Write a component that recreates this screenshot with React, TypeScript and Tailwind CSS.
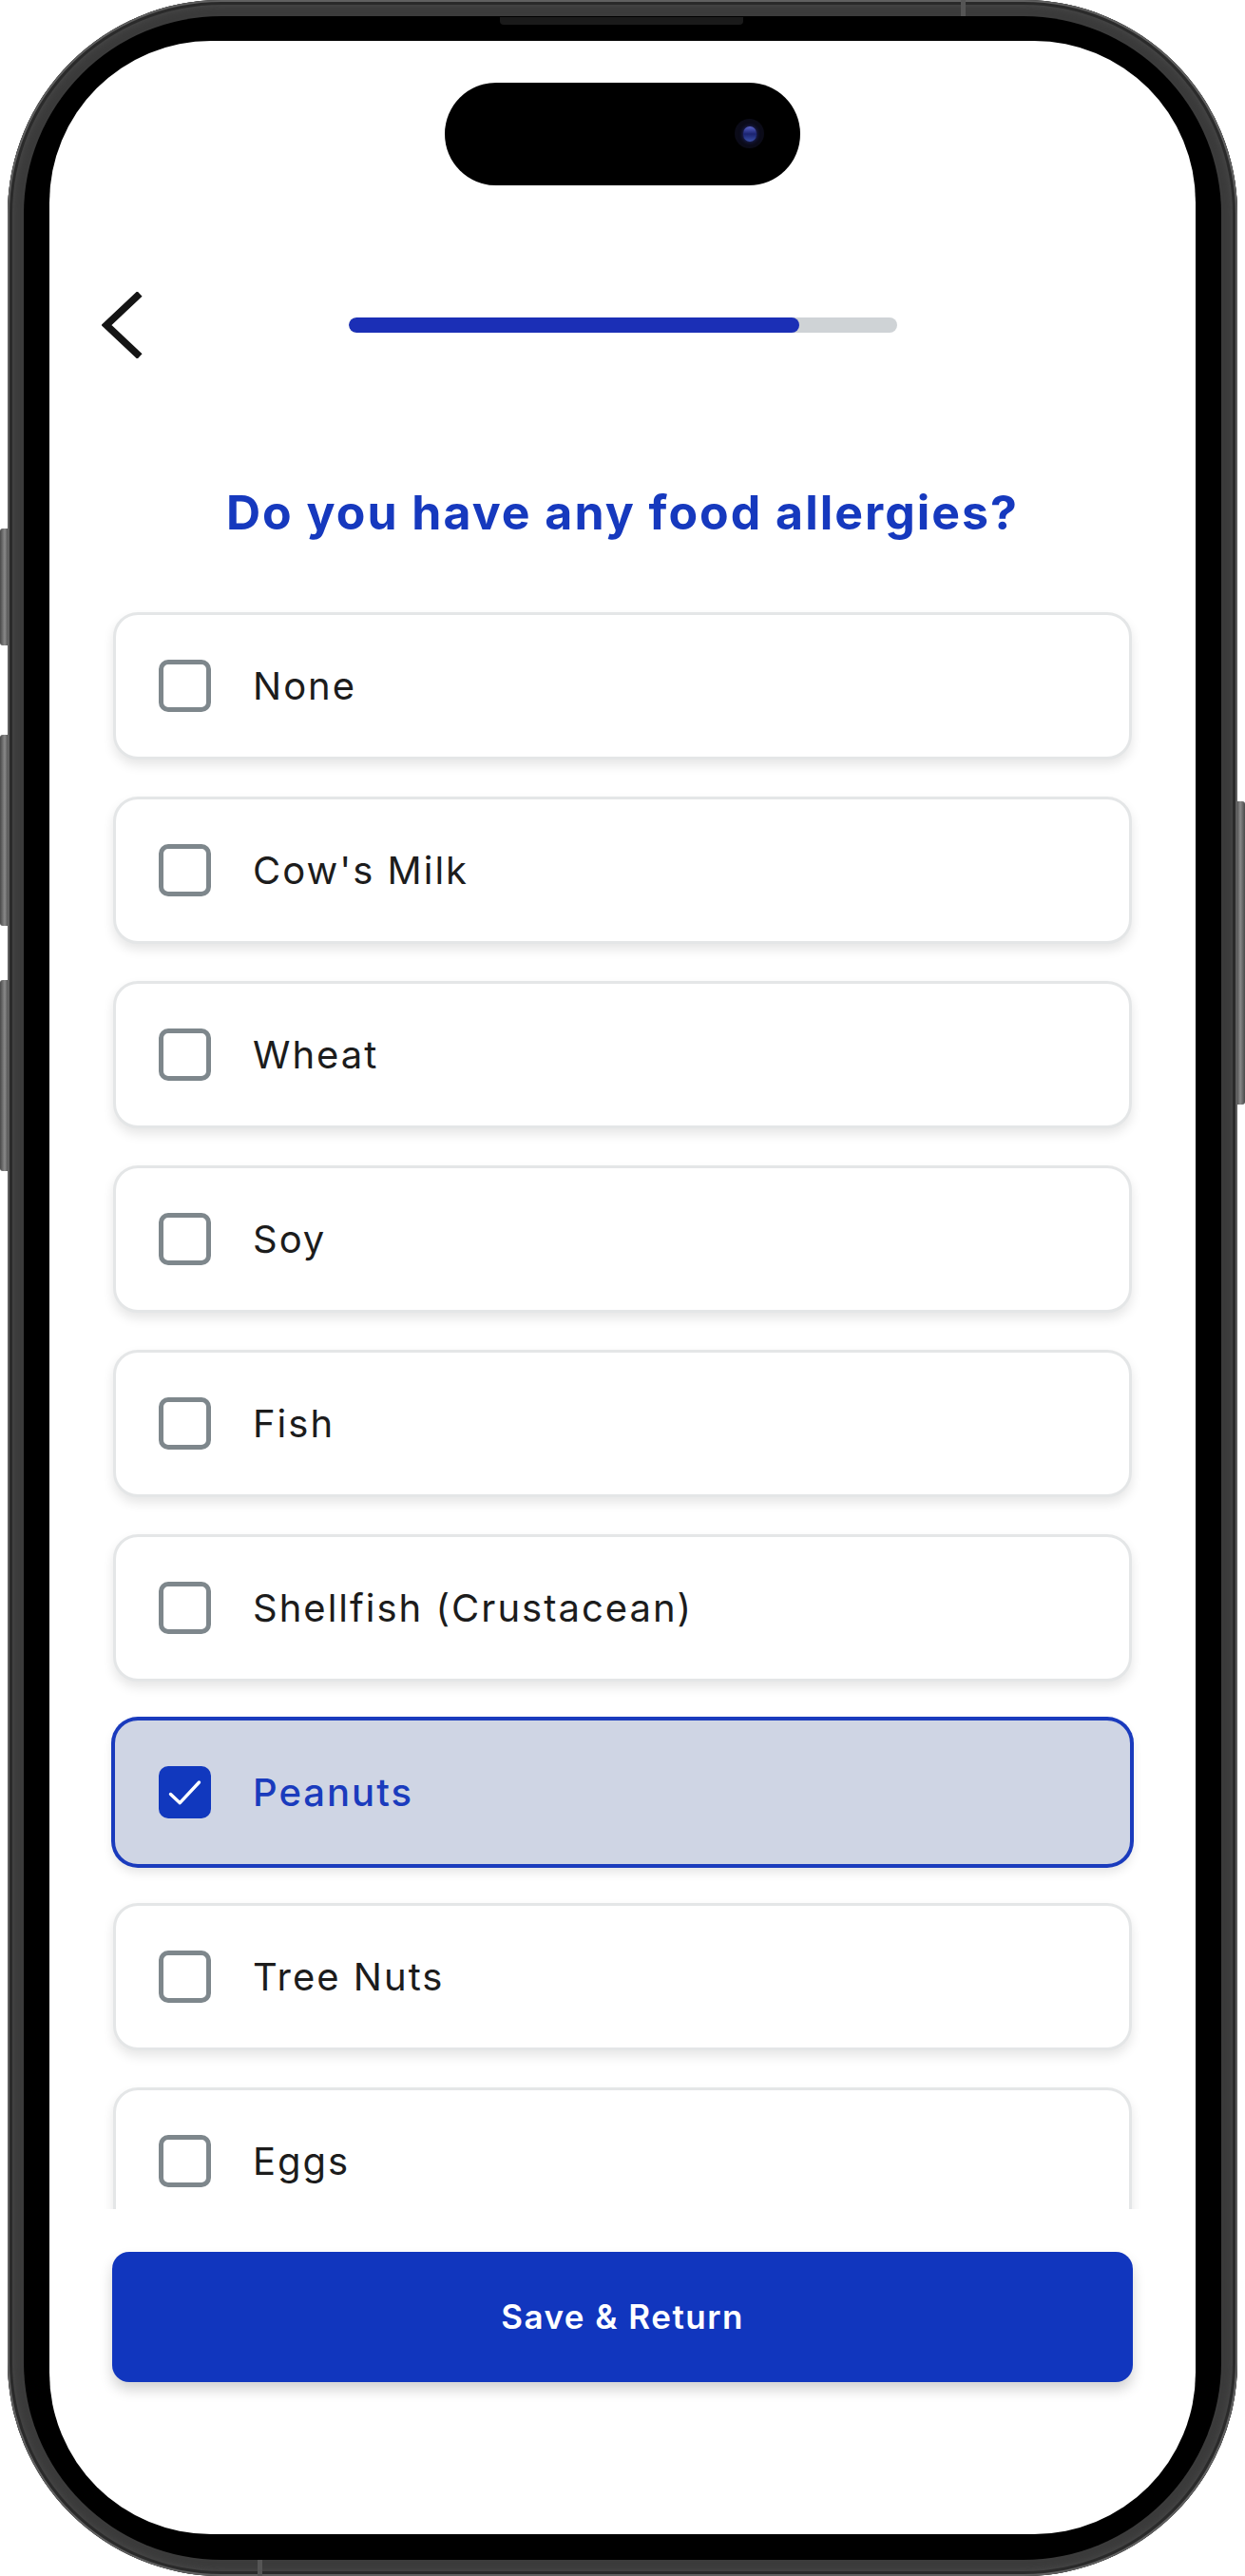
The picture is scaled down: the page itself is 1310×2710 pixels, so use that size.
import React from "react";

const items = [
  { label: "None", checked: false },
  { label: "Cow's Milk", checked: false },
  { label: "Wheat", checked: false },
  { label: "Soy", checked: false },
  { label: "Fish", checked: false },
  { label: "Shellfish (Crustacean)", checked: false },
  { label: "Peanuts", checked: true },
  { label: "Tree Nuts", checked: false },
  { label: "Eggs", checked: false },
];

function Card({ label, checked }: { label: string; checked: boolean }) {
  return (
    <div
      className={
        checked
          ? "flex h-[155px] shrink-0 items-center gap-[44px] rounded-[26px] border-[2px] border-[#1a3bbd] bg-[#cfd5e4] pl-[46px] shadow-[0_0_0_2px_#1a3bbd,0_6px_12px_rgba(0,0,0,0.12)]"
          : "flex h-[155px] shrink-0 items-center gap-[44px] rounded-[26px] border-[3px] border-[#e4e6e7] bg-white pl-[45px] shadow-[0_6px_12px_rgba(0,0,0,0.10)]"
      }
    >
      {checked ? (
        <div className="flex h-[55px] w-[55px] items-center justify-center rounded-[10px] bg-[#1138be]">
          <svg width="55" height="55" viewBox="0 0 55 55">
            <polyline
              points="12.5,29.5 22.3,38.7 42.5,17"
              fill="none"
              stroke="white"
              strokeWidth="3.4"
              strokeLinecap="round"
              strokeLinejoin="round"
            />
          </svg>
        </div>
      ) : (
        <div className="h-[55px] w-[55px] rounded-[10px] border-[5px] border-[#7e878c] bg-white" />
      )}
      <span
        className={
          checked
            ? "text-[40px] font-medium leading-none tracking-[2px] text-[#1a3bbd]"
            : "text-[40px] font-normal leading-none tracking-[2px] text-[#1c1c1c]"
        }
      >
        {label}
      </span>
    </div>
  );
}

export default function App() {
  return (
    <div
      className="relative h-[2710px] w-[1310px] bg-white"
      style={{ fontFamily: "Inter, 'Noto Sans', sans-serif" }}
    >
      {/* side buttons */}
      <div className="absolute left-0 top-[556px] h-[123px] w-[10px] rounded-l-[3px] bg-gradient-to-r from-[#4a4a4a] via-[#8a8a8a] to-[#3a3a3a]" />
      <div className="absolute left-0 top-[773px] h-[201px] w-[10px] rounded-l-[3px] bg-gradient-to-r from-[#4a4a4a] via-[#8a8a8a] to-[#3a3a3a]" />
      <div className="absolute left-0 top-[1031px] h-[201px] w-[10px] rounded-l-[3px] bg-gradient-to-r from-[#4a4a4a] via-[#8a8a8a] to-[#3a3a3a]" />
      <div className="absolute right-0 top-[843px] h-[319px] w-[10px] rounded-r-[3px] bg-gradient-to-l from-[#4a4a4a] via-[#8a8a8a] to-[#3a3a3a]" />

      {/* phone body */}
      <div className="relative ml-[8px] h-[2710px] w-[1294px] rounded-[225px] bg-[#3b3b3b] p-[17px] shadow-[inset_0_0_0_2px_#606060,inset_0_0_0_5px_#2a2a2a,inset_0_0_10px_3px_#555]">
        {/* speaker slot */}
        <div className="absolute left-[518px] top-[18px] h-[8px] w-[256px] rounded-b-[4px] bg-[#1a1a1a]" />
        {/* antenna lines */}
        <div className="absolute left-[1003px] top-0 h-[17px] w-[5px] bg-[#555]" />
        <div className="absolute bottom-0 left-[263px] h-[17px] w-[5px] bg-[#555]" />

        <div className="h-full w-full rounded-[208px] bg-black pb-[27px] pl-[27px] pr-[27px] pt-[26px]">
          {/* screen */}
          <div className="relative flex h-full w-full flex-col overflow-hidden rounded-[170px] bg-white">
            {/* dynamic island */}
            <div className="absolute left-[416px] top-[44px] h-[108px] w-[374px] rounded-full bg-black">
              <div className="absolute left-[305px] top-[38px] flex h-[31px] w-[31px] items-center justify-center rounded-full bg-[#0b0b18]">
                <div className="h-[16px] w-[14px] rounded-full bg-gradient-to-b from-[#5b63c9] via-[#1b2370] to-[#3a4fa8] shadow-[0_0_4px_#2a2f80]" />
              </div>
            </div>

            {/* header */}
            <div className="mt-[264px] grid h-[66px] grid-cols-[1fr_577px_1fr] items-center">
              <div className="pl-[55px]">
                <svg width="44" height="70" viewBox="0 0 44 70">
                  <polyline
                    points="40,2 5,35 40,68"
                    fill="none"
                    stroke="#141414"
                    strokeWidth="7.5"
                    strokeLinecap="butt"
                    strokeLinejoin="miter"
                  />
                </svg>
              </div>
              <div className="h-[16px] w-[577px] overflow-hidden rounded-full bg-[#cfd3d6]">
                <div className="h-full w-[474px] rounded-full bg-[#1b2fb6]" />
              </div>
              <div />
            </div>

            {/* title */}
            <h1 className="mt-[136px] text-center text-[50px] font-bold leading-[60px] tracking-[2px] text-[#1639be]">
              Do you have any food allergies?
            </h1>

            {/* list */}
            <div className="mt-[73px] flex h-[1682px] flex-col gap-[39px] overflow-hidden px-[67px] pt-[2px]">
              {items.map((it) => (
                <Card key={it.label} label={it.label} checked={it.checked} />
              ))}
            </div>

            {/* button */}
            <div className="px-[66px] pt-[45px]">
              <button className="flex h-[137px] w-full items-center justify-center rounded-[18px] bg-[#1136be] text-[35px] font-semibold tracking-[1.5px] text-white shadow-[0_8px_14px_rgba(0,0,0,0.18)]">
                Save &amp; Return
              </button>
            </div>
          </div>
        </div>
      </div>
    </div>
  );
}
